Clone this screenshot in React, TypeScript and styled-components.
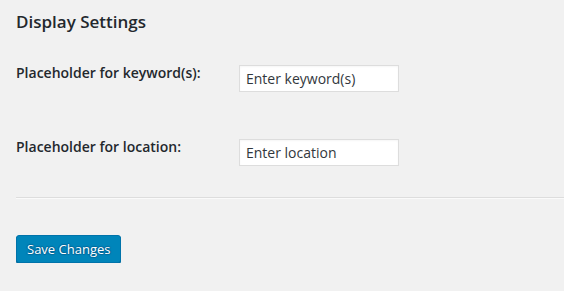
import styled, { createGlobalStyle } from "styled-components";

const GlobalStyle = createGlobalStyle`
  html, body {
    margin: 0;
    padding: 0;
    background: #f1f1f1;
  }
  body {
    font-family: "Open Sans", "Liberation Sans", sans-serif;
    color: #23282d;
  }
`;

const Wrap = styled.div`
  padding: 11px 0 0 16px;
`;

const Heading = styled.h3`
  margin: 0;
  font-size: 17px;
  font-weight: 600;
  line-height: 22px;
  color: #23282d;
`;

const FormTable = styled.div`
  display: flex;
  flex-direction: column;
  gap: 46px;
  margin-top: 31px;
`;

const Row = styled.div`
  display: grid;
  grid-template-columns: 223px 160px;
  align-items: start;
`;

const Label = styled.label`
  font-size: 14px;
  font-weight: 600;
  line-height: 18px;
  color: #23282d;
`;

const TextInput = styled.input`
  box-sizing: border-box;
  width: 160px;
  height: 27px;
  margin: 1px 0 0;
  padding: 0 6px;
  border: 1px solid #ddd;
  background: #fff;
  box-shadow: inset 0 1px 2px rgba(0, 0, 0, 0.04);
  font-family: "Open Sans", "Liberation Sans", sans-serif;
  font-size: 14px;
  color: #32373c;
  outline: none;
`;

const Divider = styled.hr`
  margin: 31px 0 0;
  height: 0;
  border: 0;
  border-top: 1px solid #ddd;
  border-bottom: 1px solid #fafafa;
`;

const SubmitButton = styled.button`
  display: block;
  margin-top: 36px;
  height: 28px;
  padding: 0 10px 1px;
  border: 1px solid #0073aa;
  border-radius: 3px;
  background: #0085ba;
  box-shadow: 0 1px 0 #006799;
  color: #fff;
  font-family: "Open Sans", "Liberation Sans", sans-serif;
  font-size: 13px;
  line-height: 26px;
  text-shadow: 0 -1px 1px #006799, 1px 0 1px #006799, 0 1px 1px #006799,
    -1px 0 1px #006799;
  cursor: pointer;
`;

export default function App() {
  return (
    <>
      <GlobalStyle />
      <Wrap>
        <Heading>Display Settings</Heading>
        <FormTable>
          <Row>
            <Label htmlFor="kw">Placeholder for keyword(s):</Label>
            <TextInput id="kw" defaultValue="Enter keyword(s)" />
          </Row>
          <Row>
            <Label htmlFor="loc">Placeholder for location:</Label>
            <TextInput id="loc" defaultValue="Enter location" />
          </Row>
        </FormTable>
        <Divider />
        <SubmitButton type="button">Save Changes</SubmitButton>
      </Wrap>
    </>
  );
}
